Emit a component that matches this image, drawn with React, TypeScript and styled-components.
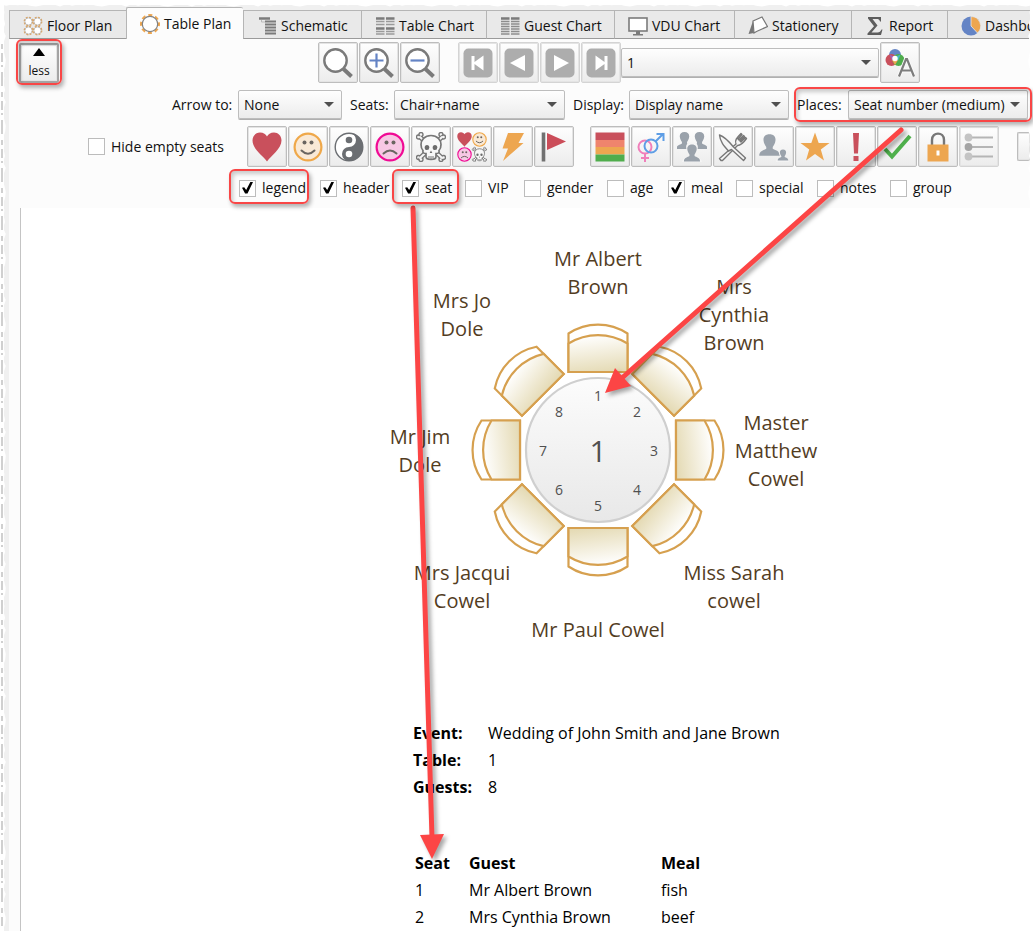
import React from "react";
import styled, { createGlobalStyle, css } from "styled-components";

const GlobalStyle = createGlobalStyle`
  *, *::before, *::after { box-sizing: border-box; }
  body {
    margin: 0;
    background: #fff;
    color: #111;
    font-family: "Open Sans", "Noto Sans", sans-serif;
    font-size: 14px;
    line-height: 20px;
  }
  button, select, input { font: inherit; color: inherit; margin: 0; }
`;

/* ---------- shell ---------- */

const Page = styled.main`
  position: relative;
  overflow: hidden;
  padding: 5px 3px 5px 4px;
`;

const Shell = styled.div`
  padding: 0 0 0 5px;
  background: #f0f0f0;
`;

const Body = styled.div`
  background: #fcfcfc;
`;

const TornTop = styled.svg`
  position: absolute;
  top: 3px;
  left: 0;
  width: 100%;
  height: 5px;
`;

const TornSide = styled.svg<{ $side: "left" | "right" }>`
  position: absolute;
  top: 0;
  ${(p) => p.$side}: 0;
  width: 7px;
  height: 100%;
`;

/* ---------- tabs ---------- */

const Tabs = styled.nav`
  display: flex;
  align-items: flex-end;
  height: 34px;
  padding-top: 2px;
  background: #f0f0f0;
  overflow: hidden;
`;

const Tab = styled.button<{ $width?: number; $active?: boolean }>`
  display: flex;
  align-items: center;
  gap: 4px;
  ${(p) => (p.$width ? css`flex: 0 0 ${p.$width}px;` : css`flex: 1 1 0; min-width: 0;`)}
  height: 29px;
  padding: 2px 0 0 13px;
  border: 1px solid #b5b5b5;
  border-width: 1px 0 1px 1px;
  border-bottom-color: #9a9a9a;
  background: #e9e9e9;
  white-space: nowrap;
  overflow: hidden;
  ${(p) =>
    p.$active &&
    css`
      height: 32px;
      padding: 0 0 0 13px;
      border-bottom: 0;
      border-radius: 2px 2px 0 0;
      background: #fcfcfc;
    `}
  svg { flex: none; }
`;

/* ---------- toolbar rows ---------- */

const Tools = styled.header`
  display: flex;
  flex-direction: column;
  gap: 7px;
  padding: 3px 0 10px;
`;

const Row = styled.div<{ $start: number }>`
  display: flex;
  align-items: center;
  padding-left: ${(p) => p.$start}px;
  > * { flex: none; }
`;

const ButtonGroup = styled.div<{ $before?: number }>`
  display: flex;
  gap: 1px;
  margin-left: ${(p) => p.$before ?? 0}px;
`;

const face = css`
  border: 1px solid #bdbdbd;
  border-radius: 2px;
  background: linear-gradient(#fefefe, #ececec);
  box-shadow: 0 0 0 1px #e4e4e4 inset;
`;

const ToolButton = styled.button<{ $faded?: boolean }>`
  display: flex;
  align-items: center;
  justify-content: center;
  width: 40px;
  height: 41px;
  padding: 0;
  ${face}
  border-color: ${(p) => (p.$faded ? "#d4d4d4" : "#bdbdbd")};
`;

const LessButton = styled.button`
  display: flex;
  flex-direction: column;
  align-items: center;
  gap: 8px;
  width: 40px;
  height: 40px;
  padding: 3px 0 0;
  font-size: 12px;
  line-height: 14px;
  ${face}
  border: 2px solid #a5a5a5;
`;

const Marked = styled.div<{ $inset: string }>`
  position: relative;
  display: flex;
  &::after {
    content: "";
    position: absolute;
    z-index: 1;
    inset: ${(p) => p.$inset};
    border: 2px solid #f94646;
    border-radius: 6px;
    box-shadow: 2px 3px 4px rgba(0, 0, 0, 0.3), inset 2px 3px 4px rgba(0, 0, 0, 0.2);
    pointer-events: none;
  }
`;

const SelectBox = styled.span<{ $width: number }>`
  position: relative;
  display: block;
  width: ${(p) => p.$width}px;
  &::after {
    content: "";
    position: absolute;
    top: 12px;
    right: 8px;
    border: 5px solid transparent;
    border-top-color: #505050;
    border-bottom: 0;
    pointer-events: none;
  }
`;

const Select = styled.select`
  appearance: none;
  display: block;
  width: 100%;
  height: 29px;
  padding: 0 0 0 5px;
  ${face}
  box-shadow: 0 1px 0 #b0b0b0;
`;

const Field = styled.div<{ $width: number }>`
  display: flex;
  align-items: center;
  label {
    width: ${(p) => p.$width}px;
    white-space: nowrap;
  }
`;

const Choice = styled.label<{ $width: number }>`
  display: flex;
  align-items: center;
  gap: 6px;
  width: ${(p) => p.$width}px;
  white-space: nowrap;
`;

const Check = styled.input`
  appearance: none;
  flex: none;
  width: 17px;
  height: 17px;
  border: 1px solid #bcbcbc;
  background: #fff;
  &:checked::after {
    content: "";
    display: block;
    width: 11px;
    height: 12px;
    margin: 1px 2px;
    background: #000;
    clip-path: polygon(0 52%, 20% 48%, 38% 70%, 78% 0, 100% 4%, 50% 100%, 28% 100%);
  }
`;

const CheckRow = styled(Row)`
  padding-top: 4px;
`;

const Partial = styled.span`
  && { flex: 1 1 0; }
  height: 29px;
  margin-left: 18px;
  ${face}
  border-right: 0;
`;

/* ---------- canvas ---------- */

const Canvas = styled.section`
  margin-left: 11px;
  min-height: 720px;
  border-left: 1px solid #c4c4c4;
  background: #fff;
`;

const Plan = styled.div`
  position: relative;
  height: 512px;
`;

const Furniture = styled.svg`
  position: absolute;
  left: 447px;
  top: 112px;
`;

const GuestName = styled.div`
  position: absolute;
  transform: translateX(-50%);
  font-size: 20px;
  line-height: 28px;
  text-align: center;
  white-space: pre;
  color: #533d1f;
`;

const Facts = styled.dl`
  display: grid;
  grid-template-columns: 75px 1fr;
  margin: 0 0 49px 392px;
  line-height: 27px;
  font-size: 16px;
  color: #000;
  dt { font-weight: 700; }
  dd { margin: 0; }
`;

const GuestTable = styled.table`
  margin-left: 394px;
  border-collapse: collapse;
  line-height: 27px;
  font-size: 16px;
  color: #000;
  th, td { padding: 0; text-align: left; }
  th:nth-child(1) { width: 54px; }
  th:nth-child(2) { width: 192px; }
`;

const Pointers = styled.svg`
  position: absolute;
  left: 0;
  top: 0;
  pointer-events: none;
  filter: drop-shadow(3px 3px 2px rgba(0, 0, 0, 0.35));
`;

/* ---------- icons ---------- */

const GREY = "#7b7b7b";

const Icon = ({ children, size = 30 }: { children: React.ReactNode; size?: number }) => (
  <svg width={size} height={size} viewBox="0 0 30 30" fill="none" aria-hidden="true">
    {children}
  </svg>
);

const SmallIcon = ({ children }: { children: React.ReactNode }) => (
  <svg width="20" height="20" viewBox="0 0 20 20" fill="none" aria-hidden="true">
    {children}
  </svg>
);

const HeartShape = () => (
  <path d="M15 29.500C11 23.500 .5 17 .5 8.500C.5 3.500 4 .5 8 .5C11.500 .5 14 2.500 15 4.500C16 2.500 18.500 .5 22 .5C26 .5 29.500 3.500 29.500 8.500C29.500 17 19 23.500 15 29.500Z" fill="#c9505c" />
);

const Face = ({ line, fill, sad }: { line: string; fill: string; sad?: boolean }) => (
  <>
    <circle cx="15" cy="15" r="13.400" fill={fill} stroke={line} strokeWidth="2.200" />
    <circle cx="11.500" cy="10.500" r="2" fill="#6a6560" />
    <circle cx="18.500" cy="10.500" r="2" fill="#6a6560" />
    <path d={sad ? "M8.500 21.500Q15 15.500 21.500 21.500" : "M8.500 18.500Q15 25 21.500 18.500"} stroke="#6a6560" strokeWidth="2" strokeLinecap="round" />
  </>
);

const Skull = () => (
  <>
    <g strokeLinecap="round">
      <path d="M4 5L26 26M26 5L4 26" stroke="#777" strokeWidth="4.500" />
      {[[2.500, 5], [5, 2.500], [25, 2.500], [27.500, 5], [2.500, 25.500], [5, 27.500], [25, 27.500], [27.500, 25.500]].map(([x, y]) => (
        <circle key={`${x}-${y}`} cx={x} cy={y} r="2" fill="#f6f6f6" stroke="#777" strokeWidth="1.400" />
      ))}
      <path d="M4 5L26 26M26 5L4 26" stroke="#f6f6f6" strokeWidth="2" />
    </g>
    <path d="M15 3.500C8.500 3.500 5 8 5 12.500C5 15.500 6 17.500 7 18.500C6.500 20.500 7.500 21.500 10 21.500V24.500C10 26.500 12 27.500 15 27.500C18 27.500 20 26.500 20 24.500V21.500C22.500 21.500 23.500 20.500 23 18.500C24 17.500 25 15.500 25 12.500C25 8 21.500 3.500 15 3.500Z" fill="#f8f8f8" stroke="#777" strokeWidth="1.700" />
    <ellipse cx="11" cy="15.500" rx="2.300" ry="2.600" fill="#6c6c6c" />
    <ellipse cx="19" cy="15.500" rx="2.300" ry="2.600" fill="#6c6c6c" />
    <path d="M15 18.500L13.700 21H16.300Z" fill="#6c6c6c" />
    <path d="M13 24V26.500M15 24V27M17 24V26.500" stroke="#777" />
  </>
);

const Magnifier = ({ sign }: { sign?: "plus" | "minus" }) => (
  <Icon>
    <path d="M20.500 21L28.500 28.500" stroke="#7a7a7a" strokeWidth="4" />
    <circle cx="12.500" cy="12.500" r="11.200" fill="#fff" stroke="#7a7a7a" strokeWidth="2.400" />
    {sign && <path d={sign === "plus" ? "M5.500 12.500H19.500M12.500 5.500V19.500" : "M5.500 12.500H19.500"} stroke="#6484c5" strokeWidth="2.200" />}
  </Icon>
);

const NavIcon = ({ d }: { d: string }) => (
  <Icon>
    <rect x=".5" y=".5" width="29" height="29" rx="5" fill="#adadad" />
    <path d={d} fill="#fff" />
  </Icon>
);

const Person = ({ x, y, s, fill = "#9aa2ab" }: { x: number; y: number; s: number; fill?: string }) => (
  <path
    transform={`translate(${x} ${y}) scale(${s})`}
    d="M0 -10C4 -10 6 -7.500 5.500 -4C5.200 -1.500 4 .5 3 1.800V3.500C5 5 9.500 5 9.500 10H-9.500C-9.500 5 -5 5 -3 3.500V1.800C-4 .5 -5.200 -1.500 -5.500 -4C-6 -7.500 -4 -10 0 -10Z"
    fill={fill}
  />
);

const statusIcons: [string, React.ReactNode][] = [
  ["Love", <Icon key="i"><HeartShape /></Icon>],
  ["Happy", <Icon key="i"><Face line="#efa84a" fill="#f9e9d6" /></Icon>],
  ["Neutral", (
    <Icon key="i">
      <circle cx="15" cy="15" r="13.800" fill="#fff" stroke="#6b6e72" strokeWidth="1.400" />
      <path d="M15 1A14 14 0 0 1 15 29A7 7 0 0 1 15 15A7 7 0 0 0 15 1" fill="#6b6e72" />
      <circle cx="15" cy="8" r="3.300" fill="#6b6e72" />
      <circle cx="15" cy="22" r="3.300" fill="#fff" />
    </Icon>
  )],
  ["Unhappy", <Icon key="i"><Face line="#f00a94" fill="#f7c8e4" sad /></Icon>],
  ["Hostile", <Icon key="i"><Skull /></Icon>],
  ["All relationships", (
    <Icon key="i">
      <g transform="scale(.5)"><HeartShape /></g>
      <g transform="translate(15 0) scale(.5)"><Face line="#efa84a" fill="#f9e9d6" /></g>
      <g transform="translate(0 15) scale(.5)"><Face line="#f00a94" fill="#f7c8e4" sad /></g>
      <g transform="translate(15 15) scale(.5)"><Skull /></g>
    </Icon>
  )],
  ["Conflicts", <Icon key="i"><path d="M10 1H26L20.500 11H25.500L5 29L10 16.500H4.500Z" fill="#eda650" /></Icon>],
  ["Flag", (
    <Icon key="i">
      <path d="M4.500 .5V29.500" stroke="#717171" strokeWidth="3.600" />
      <path d="M8 1L27 9.500L8 18Z" fill="#cb4d59" />
    </Icon>
  )],
];

const detailIcons: [string, React.ReactNode, boolean?][] = [
  ["Colours", (
    <Icon key="i">
      <path d="M.5 .5H29.500V8H.5Z" fill="#c9505c" />
      <path d="M.5 8H29.500V15H.5Z" fill="#ef846d" />
      <path d="M.5 15H29.500V22.500H.5Z" fill="#eda650" />
      <path d="M.5 22.500H29.500V29.500H.5Z" fill="#4fad4c" />
    </Icon>
  )],
  ["Gender", (
    <Icon key="i">
      <circle cx="9" cy="15" r="6.500" stroke="#f07fba" strokeWidth="2" />
      <path d="M9 21.500V30M5 26H13" stroke="#f07fba" strokeWidth="2" />
      <circle cx="15" cy="14" r="6.500" stroke="#5e9ee6" strokeWidth="2" />
      <path d="M19.500 9.500L27 2M20.500 2H27.500V9" stroke="#5e9ee6" strokeWidth="2" />
    </Icon>
  )],
  ["Groups", (
    <Icon key="i">
      <Person x={7.500} y={8.500} s={0.850} />
      <Person x={22.500} y={8.500} s={0.850} />
      <Person x={15} y={20.500} s={1.050} fill="#f5f5f5" />
      <Person x={15} y={21} s={0.850} />
    </Icon>
  )],
  ["Meals", (
    <Icon key="i">
      <g stroke="#777" strokeWidth="1.400" strokeLinejoin="round">
        <path d="M3 28.500L1.500 26.500L18 12C16.500 8.500 18.500 6 23 1.500L24 2.500L20 7L21 8L25.500 3.500L26.500 4.500L22 9L23 10L27.500 5.500L28.500 6.500C25 11.500 22.500 13.500 19.500 13.500L4.500 28.500Z" fill="#f5f5f5" />
        <path d="M1.500 3C6 4.500 11 9.500 15.500 15L27.500 26L25.500 28.500L13.500 17.500L10.500 19C6 14 2 9.500 1.500 3Z" fill="#f5f5f5" />
      </g>
    </Icon>
  )],
  ["Ages", (
    <Icon key="i">
      <Person x={10.500} y={13} s={1.080} />
      <Person x={23.500} y={23} s={0.680} fill="#f5f5f5" />
      <Person x={24} y={23} s={0.560} />
    </Icon>
  )],
  ["VIP", <Icon key="i"><path d="M15 .5L18.700 11H29.500L20.800 17.500L24 28.500L15 22L6 28.500L9.200 17.500L.5 11H11.300Z" fill="#eda650" /></Icon>],
  ["Alerts", <Icon key="i"><path d="M12 1H18L17 21.500H13ZM12.500 24H17.500V29H12.500Z" fill="#c9505c" /></Icon>],
  ["Confirmed", <Icon key="i"><path d="M3 17L10 24.500L28 4" stroke="#4fb04c" strokeWidth="4" /></Icon>],
  ["Locked", (
    <Icon key="i">
      <path d="M9 14V8C9 -.5 21 -.5 21 8V14" stroke="#777" strokeWidth="2.400" />
      <rect x="4.500" y="12.500" width="21" height="17" fill="#eda650" />
      <rect x="13.500" y="18.500" width="3" height="5" fill="#fff" />
    </Icon>
  )],
  ["List", (
    <Icon key="i">
      <path d="M5 5.500H29M5 15H29M5 24.500H29" stroke="#b5b5b5" strokeWidth="2" />
      <circle cx="4.500" cy="5.500" r="3.900" fill="#c4c4c4" />
      <circle cx="4.500" cy="15" r="3.900" fill="#a5a5a5" />
      <circle cx="4.500" cy="24.500" r="3.900" fill="#c4c4c4" />
    </Icon>
  ), true],
];

const rows = (x: number, w: number, ys: number[]) => ys.map((y) => `M${x} ${y}H${x + w}`).join("");

const tabs: { label: string; width?: number; active?: boolean; icon: React.ReactNode }[] = [
  {
    label: "Floor Plan", width: 117,
    icon: <SmallIcon>{[[5.500, 5.500], [14.500, 5.500], [5.500, 14.500], [14.500, 14.500]].map(([x, y]) => (
      <g key={`${x}${y}`}>
        <circle cx={x} cy={y} r="4.200" fill="#fff" stroke="#dba565" strokeWidth="1.400" strokeDasharray="2 1.300" />
        <circle cx={x} cy={y} r="3.600" stroke="#aaa" strokeWidth=".7" />
      </g>
    ))}</SmallIcon>,
  },
  {
    label: "Table Plan", width: 117, active: true,
    icon: <SmallIcon>
      <circle cx="10" cy="10" r="8.800" stroke="#eda650" strokeWidth="2.400" strokeDasharray="4 2.911" strokeDashoffset="2" />
      <circle cx="10" cy="10" r="7.700" fill="#fff" stroke="#828282" strokeWidth="1.200" />
    </SmallIcon>,
  },
  {
    label: "Schematic", width: 118,
    icon: <SmallIcon>
      <path d="M2 2.500H13" stroke={GREY} strokeWidth="2.500" />
      <path d="M4.500 4V6H8" stroke="#bbb" />
      <path d={rows(8, 11, [5.500, 8.500, 11.500, 14.500, 17.500])} stroke={GREY} strokeWidth="1.800" />
    </SmallIcon>,
  },
  {
    label: "Table Chart", width: 125,
    icon: <SmallIcon>
      <path d={rows(1, 8.500, [2.500, 12.500]) + rows(11, 8.500, [2.500, 12.500])} stroke={GREY} strokeWidth="2.400" />
      <path d={rows(1, 8.500, [5.500, 8.500, 15.500, 18]) + rows(11, 8.500, [5.500, 8.500, 15.500, 18])} stroke="#9a9a9a" strokeWidth="1.600" />
    </SmallIcon>,
  },
  {
    label: "Guest Chart", width: 128,
    icon: <SmallIcon>
      <path d={rows(1, 8.500, [2.500]) + rows(11, 8.500, [2.500])} stroke={GREY} strokeWidth="2.400" />
      <path d={rows(1, 8.500, [5.500, 8, 10.500, 13, 15.500, 18]) + rows(11, 8.500, [5.500, 8, 10.500, 13, 15.500, 18])} stroke="#8d8d8d" strokeWidth="1.400" />
    </SmallIcon>,
  },
  {
    label: "VDU Chart", width: 120,
    icon: <SmallIcon>
      <rect x="1" y="2" width="18" height="13" fill="#fff" stroke={GREY} strokeWidth="1.600" />
      <path d="M8 15H12V18H15V19.500H5V18H8Z" fill={GREY} />
    </SmallIcon>,
  },
  {
    label: "Stationery", width: 117,
    icon: <SmallIcon>
      <path d="M5 5L.5 18L6 17Z" fill="#777" />
      <path d="M5 5L14 1L19.500 10.500L8.500 15.500L6 17Z" fill="#fff" stroke="#777" strokeWidth="1.200" />
    </SmallIcon>,
  },
  {
    label: "Report", width: 96,
    icon: <SmallIcon><path d="M3 1H16V5.500H15C14.500 3.500 13.500 3 11.500 3H7.500L12.500 9.500L6.500 16.500H12.500C14.500 16.500 15.500 15.500 16.500 13.500H17.500L16 19H2.500V17.500L9 10.200L3 2.500Z" fill="#5d5d5d" /></SmallIcon>,
  },
  {
    label: "Dashboard",
    icon: <SmallIcon>
      <circle cx="10" cy="10" r="9.500" fill="#6484c5" />
      <path d="M10 10V.5A9.500 9.500 0 0 1 16.500 17Z" fill="#eda650" stroke="#e9e9e9" strokeWidth=".8" />
    </SmallIcon>,
  },
];

/* ---------- data ---------- */

const choices = [
  { label: "legend", width: 81, on: true, mark: "-9px 11px -6px -10px" },
  { label: "header", width: 82, on: true },
  { label: "seat", width: 63, on: true, mark: "-9px 6px -6px -10px" },
  { label: "VIP", width: 59 },
  { label: "gender", width: 83 },
  { label: "age", width: 61 },
  { label: "meal", width: 68, on: true },
  { label: "special", width: 81 },
  { label: "notes", width: 73 },
  { label: "group", width: 73 },
];

const names = [
  { x: 577, y: 37, text: "Mr Albert\nBrown" },
  { x: 713, y: 65, text: "Mrs\nCynthia\nBrown" },
  { x: 755, y: 201, text: "Master\nMatthew\nCowel" },
  { x: 713, y: 351, text: "Miss Sarah\ncowel" },
  { x: 577, y: 408, text: "Mr Paul Cowel" },
  { x: 441, y: 351, text: "Mrs Jacqui\nCowel" },
  { x: 399, y: 215, text: "Mr Jim\nDole" },
  { x: 441, y: 79, text: "Mrs Jo\nDole" },
];

const seatNumbers = [[0, -54], [39, -38], [56, 1], [39, 40], [0, 56], [-39, 40], [-55, 1], [-39, -38]];

const guests = [
  { seat: 1, name: "Mr Albert Brown", meal: "fish" },
  { seat: 2, name: "Mrs Cynthia Brown", meal: "beef" },
];

const jag = (n: number) => (((n * 37) % 11) * 3) % 5;
const tornTop = `M0 0H2100V${jag(2)}` + Array.from({ length: 350 }, (_, i) => `L${2094 - i * 6} ${1 + jag(i) * 0.6}`).join("") + "Z";
const tornSide = "M0 0" + Array.from({ length: 160 }, (_, i) => `L${1 + jag(i + 3) * 0.7} ${i * 6}`).join("") + "L0 954Z";

const Picker = ({ id, label, width, value, labelWidth }: { id: string; label: string; width: number; value: string; labelWidth: number }) => (
  <Field $width={labelWidth}>
    <label htmlFor={id}>{label}</label>
    <SelectBox $width={width}>
      <Select id={id} defaultValue={value}><option>{value}</option></Select>
    </SelectBox>
  </Field>
);

const Chair = ({ angle }: { angle: number }) => (
  <g transform={`rotate(${angle})`} stroke="#d6a04f" strokeWidth="2.200">
    <path d="M-29.500 -78V-116.500A53 53 0 0 1 29.500 -116.500V-78Z" fill="#fff" />
    <path d="M-29.500 -78V-106.500A56 56 0 0 1 29.500 -106.500V-78Z" fill="url(#seat)" />
  </g>
);

const Fields = styled.div`
  display: flex;
  gap: 8px;
`;

export default function App() {
  return (
    <Page>
      <GlobalStyle />
      <Shell>
        <Tabs>
          {tabs.map((t) => (
            <Tab key={t.label} type="button" $width={t.width} $active={t.active}>
              {t.icon}
              {t.label}
            </Tab>
          ))}
        </Tabs>
        <Body>
          <Tools>
            <Row $start={10}>
              <Marked $inset="-4px -3px -2px -3px">
                <LessButton type="button">
                  <svg width="12" height="8" viewBox="0 0 12 8" aria-hidden="true"><path d="M6 0L12 8H0Z" fill="#000" /></svg>
                  less
                </LessButton>
              </Marked>
              <ButtonGroup $before={259}>
                <ToolButton type="button" aria-label="Zoom to fit"><Magnifier /></ToolButton>
                <ToolButton type="button" aria-label="Zoom in"><Magnifier sign="plus" /></ToolButton>
                <ToolButton type="button" aria-label="Zoom out"><Magnifier sign="minus" /></ToolButton>
              </ButtonGroup>
              <ButtonGroup $before={18}>
                <ToolButton type="button" $faded aria-label="First table"><NavIcon d="M8.500 8H11.500V14L20.500 7.500V22.500L11.500 16V22H8.500Z" /></ToolButton>
                <ToolButton type="button" $faded aria-label="Previous table"><NavIcon d="M6 15L21 7V23Z" /></ToolButton>
                <ToolButton type="button" $faded aria-label="Next table"><NavIcon d="M24 15L9 7V23Z" /></ToolButton>
                <ToolButton type="button" $faded aria-label="Last table"><NavIcon d="M21.500 8H18.500V14L9.500 7.500V22.500L18.500 16V22H21.500Z" /></ToolButton>
              </ButtonGroup>
              <SelectBox $width={258}>
                <Select aria-label="Table" defaultValue="1"><option>1</option></Select>
              </SelectBox>
              <ButtonGroup $before={1}>
                <ToolButton type="button" aria-label="Colours and fonts">
                  <Icon>
                    <circle cx="10" cy="7" r="6" fill="#6484c5" />
                    <circle cx="6.500" cy="12" r="6" fill="#c9505c" />
                    <circle cx="13.500" cy="12" r="6" fill="#4fad4c" />
                    <path d="M4.500 6.500L10 9L7 13Z" fill="#a45fb4" />
                    <path d="M15.500 6.500L10 9L13 13Z" fill="#45b6c4" />
                    <path d="M10 17L7 12H13Z" fill="#eda650" />
                    <circle cx="10" cy="10.500" r="2.700" fill="#fff" />
                    <path d="M14 28.500L21 11H22L29 28.500M16.500 22.500H26.500" stroke="#fafafa" strokeWidth="4" />
                    <path d="M14 28.500L21 11H22L29 28.500M16.500 22.500H26.500" stroke="#7d7d7d" strokeWidth="2.200" />
                  </Icon>
                </ToolButton>
              </ButtonGroup>
            </Row>

            <Row $start={163}>
              <Fields>
                <Picker id="arrow" label="Arrow to:" labelWidth={66} width={104} value="None" />
                <Picker id="seats" label="Seats:" labelWidth={44} width={171} value="Chair+name" />
                <Picker id="display" label="Display:" labelWidth={56} width={160} value="Display name" />
                <Marked $inset="-3px -4px -3px -3px">
                  <Picker id="places" label="Places:" labelWidth={51} width={180} value="Seat number (medium)" />
                </Marked>
              </Fields>
            </Row>

            <Row $start={79}>
              <Choice $width={159}><Check type="checkbox" />Hide empty seats</Choice>
              <ButtonGroup>
                {statusIcons.map(([label, icon]) => (
                  <ToolButton key={label} type="button" aria-label={label}>{icon}</ToolButton>
                ))}
              </ButtonGroup>
              <ButtonGroup $before={16}>
                {detailIcons.map(([label, icon, faded]) => (
                  <ToolButton key={label} type="button" aria-label={label} $faded={faded}>{icon}</ToolButton>
                ))}
              </ButtonGroup>
              <Partial />
            </Row>

            <CheckRow $start={230}>
              {choices.map((c) => {
                const choice = (
                  <Choice key={c.label} $width={c.width}>
                    <Check type="checkbox" defaultChecked={c.on} />
                    {c.label}
                  </Choice>
                );
                return c.mark ? <Marked key={c.label} $inset={c.mark}>{choice}</Marked> : choice;
              })}
            </CheckRow>
          </Tools>

          <Canvas>
            <Plan>
              <Furniture width="260" height="260" viewBox="-130 -130 260 260" fill="none">
                <defs>
                  <linearGradient id="seat" x1=".6" y1="1" x2=".4" y2="0">
                    <stop offset="0" stopColor="#e5dbb6" />
                    <stop offset="1" stopColor="#fff" />
                  </linearGradient>
                  <linearGradient id="top" x1="0" y1="0" x2="0" y2="1">
                    <stop offset="0" stopColor="#fcfcfc" />
                    <stop offset="1" stopColor="#e8e8e8" />
                  </linearGradient>
                </defs>
                {seatNumbers.map((_, i) => <Chair key={i} angle={i * 45} />)}
                <circle r="72" fill="url(#top)" stroke="#cfcfcf" strokeWidth="2.200" />
                <g fill="#505050" textAnchor="middle" fontSize="14">
                  {seatNumbers.map(([x, y], i) => <text key={i} x={x} y={y + 5}>{i + 1}</text>)}
                  <text x="0" y="12" fontSize="30">1</text>
                </g>
              </Furniture>
              {names.map((n) => (
                <GuestName key={n.text} style={{ left: n.x, top: n.y }}>{n.text}</GuestName>
              ))}
            </Plan>
            <Facts>
              <dt>Event:</dt><dd>Wedding of John Smith and Jane Brown</dd>
              <dt>Table:</dt><dd>1</dd>
              <dt>Guests:</dt><dd>8</dd>
            </Facts>
            <GuestTable>
              <thead><tr><th>Seat</th><th>Guest</th><th>Meal</th></tr></thead>
              <tbody>
                {guests.map((g) => (
                  <tr key={g.seat}><td>{g.seat}</td><td>{g.name}</td><td>{g.meal}</td></tr>
                ))}
              </tbody>
            </GuestTable>
          </Canvas>
        </Body>
      </Shell>

      <TornTop aria-hidden="true"><path d={tornTop} fill="#fff" /></TornTop>
      <TornSide $side="left" aria-hidden="true">
        <path d={tornSide} transform="translate(2 0)" fill="#fff" />
        <path d="M2 44V928" stroke="#d0d0d0" strokeWidth="2" strokeDasharray="5 4 9 3 2 5 14 6" />
      </TornSide>
      <TornSide $side="right" aria-hidden="true">
        <path d={tornSide} transform="matrix(-1 0 0 1 6 0)" fill="#fff" />
      </TornSide>

      <Pointers width="1033" height="935" viewBox="0 0 1033 935" fill="none" aria-hidden="true">
        <path d="M901 130L622 378" stroke="#fc4545" strokeWidth="5" strokeLinecap="round" />
        <path d="M605 393L615 368L631 386Z" fill="#fc4545" />
        <path d="M413 208L432 838" stroke="#fc4545" strokeWidth="5" strokeLinecap="round" />
        <path d="M432 859L420 835L444 834Z" fill="#fc4545" />
      </Pointers>
    </Page>
  );
}
